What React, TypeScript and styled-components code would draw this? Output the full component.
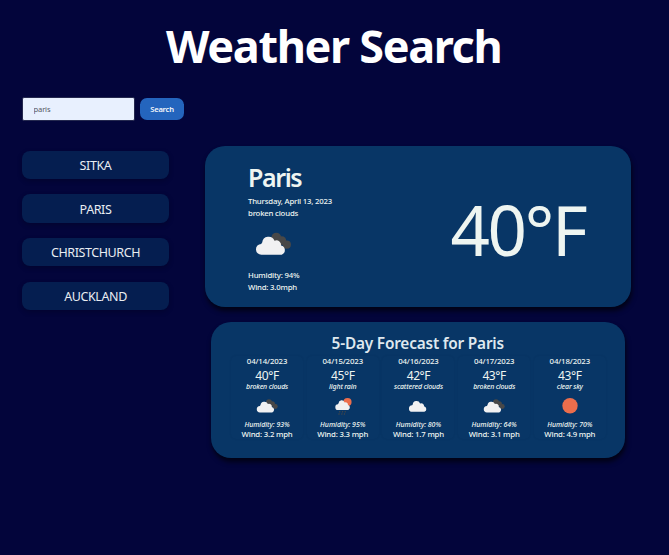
import React from "react";
import styled, { createGlobalStyle } from "styled-components";

const GlobalStyle = createGlobalStyle`
  * { box-sizing: border-box; }
  body {
    margin: 0;
    background: #03053b;
    color: #eef5f1;
    font-family: "Noto Sans", "Open Sans", sans-serif;
    overflow: hidden;
  }
`;

const Page = styled.div`
  width: 669px;
  height: 555px;
`;

const Title = styled.h1`
  margin: 0;
  padding: 16px 1.5px 1px 0;
  color: #fff;
  font-size: 45px;
  font-weight: 700;
  line-height: 60px;
  letter-spacing: -1.35px;
  text-align: center;
  white-space: nowrap;
`;

const SearchForm = styled.form`
  display: flex;
  gap: 5px;
  padding: 20px 0 0 22px;
`;

const SearchInput = styled.input`
  width: 113px;
  height: 24px;
  padding: 0 10.5px;
  border: 1px solid #25294f;
  border-radius: 2px;
  background: #e8f0fe;
  color: #55585e;
  font: 400 7.6px "Noto Sans", sans-serif;
  letter-spacing: -0.15px;
  outline: none;
`;

const SearchButton = styled.button`
  width: 44px;
  height: 22px;
  margin-top: 1px;
  padding: 0;
  border: 0;
  border-radius: 7px;
  background: #2465bd;
  color: #f4f7fb;
  font: 600 7.6px "Noto Sans", sans-serif;
  letter-spacing: -0.2px;
`;

const Content = styled.main`
  display: flex;
  align-items: flex-start;
  padding: 24.5px 0 0 22px;
`;

const Cities = styled.nav`
  display: flex;
  flex-direction: column;
  gap: 15.2px;
  width: 147px;
  padding-top: 5px;
`;

const CityButton = styled.button`
  height: 28.5px;
  padding: 2.4px 0 0;
  border: 0;
  border-radius: 8px;
  background: #051e50;
  box-shadow: 0 2px 5px rgba(0, 0, 20, 0.3);
  color: #e9edf2;
  font: 400 12.5px/26px "Noto Sans", sans-serif;
  letter-spacing: -0.4px;
`;

const Results = styled.div`
  display: flex;
  flex-direction: column;
  align-items: center;
  gap: 15px;
  width: 425.5px;
  margin-left: 36px;
`;

const Card = styled.section`
  border-radius: 20px;
  background: #083666;
  box-shadow: 1px 4px 5px rgba(0, 0, 0, 0.65);
`;

const CurrentCard = styled(Card)`
  display: flex;
  justify-content: space-between;
  width: 100%;
  height: 161.5px;
  padding: 14px 45px 0 43px;
`;

const CityName = styled.h2`
  margin: 0 0 1px;
  font-size: 25px;
  font-weight: 600;
  line-height: 34px;
  letter-spacing: -1.4px;
`;

const Detail = styled.div`
  font-size: 7.8px;
  font-weight: 500;
  line-height: 12px;
  letter-spacing: -0.2px;
  white-space: nowrap;
`;

const CurrentIcon = styled.div`
  height: 50px;
`;

const BigTemperature = styled.div`
  padding-top: 22px;
  font-size: 69px;
  line-height: 94px;
  letter-spacing: -2.3px;
  white-space: nowrap;
`;

const ForecastCard = styled(Card)`
  width: 413.5px;
  height: 136px;
  padding: 11px 18px 0;
`;

const ForecastTitle = styled.h3`
  margin: 0 0 2px;
  color: #dfe8ee;
  font-size: 15.4px;
  font-weight: 600;
  line-height: 21px;
  letter-spacing: -0.2px;
  text-align: center;
`;

const Days = styled.div`
  display: grid;
  grid-template-columns: repeat(5, 72px);
  justify-content: center;
  gap: 3.7px;
  padding-left: 1.4px;
`;

const Day = styled.article`
  height: 83px;
  border-radius: 5px;
  box-shadow: 0 0 2px rgba(0, 10, 40, 0.1);
  text-align: center;
  white-space: nowrap;
`;

const DayLine = styled.div<{ $tight?: boolean }>`
  font-size: 7.8px;
  font-weight: 500;
  line-height: 10px;
  letter-spacing: ${(p) => (p.$tight ? "-0.2px" : "-0.12px")};
`;

const DayTemperature = styled.div`
  margin-top: 2.5px;
  font-size: 12px;
  line-height: 14px;
  letter-spacing: -0.4px;
`;

const DayNote = styled.div`
  font-size: 7px;
  font-style: italic;
  font-weight: 500;
  line-height: 8px;
  letter-spacing: -0.17px;
`;

const HumidityNote = styled(DayNote)`
  letter-spacing: -0.05px;
`;

const DayIcon = styled.div`
  display: flex;
  justify-content: center;
  height: 30px;
`;

type Sky = "broken" | "rain" | "scattered" | "clear";

const Cloud = ({ transform }: { transform?: string }) => (
  <path
    fill="#f1f1f2"
    transform={transform}
    d="M13.500 35.700a5.400 5.400 0 0 1-.3-10.800 3.500 3.500 0 0 1 1-1.400 6.400 6.400 0 0 1 12.300-1.700 4.600 4.600 0 0 1 6.600 4.700 4.800 4.800 0 0 1 .6 9.200z"
  />
);

function SkyIcon({ sky, size }: { sky: Sky; size: number }) {
  return (
    <svg width={size} height={size} viewBox="0 0 50 50" aria-hidden="true">
      {sky === "broken" && (
        <>
          <g fill="#484848">
            <circle cx="28.300" cy="18.500" r="4.800" />
            <circle cx="33.800" cy="21.600" r="4.400" />
            <circle cx="38.800" cy="25.700" r="4.100" />
          </g>
          <Cloud />
        </>
      )}
      {sky === "scattered" && <Cloud transform="translate(2 -1)" />}
      {sky === "rain" && (
        <>
          <circle cx="32.500" cy="18.500" r="6.800" fill="#ec6e4c" />
          <Cloud transform="translate(5.500 -.5) scale(.84 .9)" />
          <path
            stroke="#484848"
            strokeWidth="2"
            strokeDasharray="2.200 1.800"
            d="M20 33.500l-2 6M24.500 33.500l-2 7M29 33.500l-2 6"
          />
        </>
      )}
      {sky === "clear" && <circle cx="25" cy="24.500" r="12.800" fill="#ec6e4c" />}
    </svg>
  );
}

const cities = ["SITKA", "PARIS", "CHRISTCHURCH", "AUCKLAND"];

const days: { date: string; temp: string; note: string; sky: Sky; humidity: string; wind: string }[] = [
  { date: "04/14/2023", temp: "40°F", note: "broken clouds", sky: "broken", humidity: "93%", wind: "3.2 mph" },
  { date: "04/15/2023", temp: "45°F", note: "light rain", sky: "rain", humidity: "95%", wind: "3.3 mph" },
  { date: "04/16/2023", temp: "42°F", note: "scattered clouds", sky: "scattered", humidity: "80%", wind: "1.7 mph" },
  { date: "04/17/2023", temp: "43°F", note: "broken clouds", sky: "broken", humidity: "64%", wind: "3.1 mph" },
  { date: "04/18/2023", temp: "43°F", note: "clear sky", sky: "clear", humidity: "70%", wind: "4.9 mph" },
];

export default function App() {
  return (
    <Page>
      <GlobalStyle />
      <Title>Weather Search</Title>
      <SearchForm onSubmit={(e) => e.preventDefault()}>
        <SearchInput defaultValue="paris" aria-label="City" />
        <SearchButton>Search</SearchButton>
      </SearchForm>
      <Content>
        <Cities>
          {cities.map((city) => (
            <CityButton key={city}>{city}</CityButton>
          ))}
        </Cities>
        <Results>
          <CurrentCard>
            <div>
              <CityName>Paris</CityName>
              <Detail>Thursday, April 13, 2023</Detail>
              <Detail>broken clouds</Detail>
              <CurrentIcon>
                <SkyIcon sky="broken" size={50} />
              </CurrentIcon>
              <Detail>Humidity: 94%</Detail>
              <Detail>Wind: 3.0mph</Detail>
            </div>
            <BigTemperature>40°F</BigTemperature>
          </CurrentCard>
          <ForecastCard>
            <ForecastTitle>5-Day Forecast for Paris</ForecastTitle>
            <Days>
              {days.map((d) => (
                <Day key={d.date}>
                  <DayLine>{d.date}</DayLine>
                  <DayTemperature>{d.temp}</DayTemperature>
                  <DayNote>{d.note}</DayNote>
                  <DayIcon>
                    <SkyIcon sky={d.sky} size={30} />
                  </DayIcon>
                  <HumidityNote>Humidity: {d.humidity}</HumidityNote>
                  <DayLine $tight>Wind: {d.wind}</DayLine>
                </Day>
              ))}
            </Days>
          </ForecastCard>
        </Results>
      </Content>
    </Page>
  );
}
